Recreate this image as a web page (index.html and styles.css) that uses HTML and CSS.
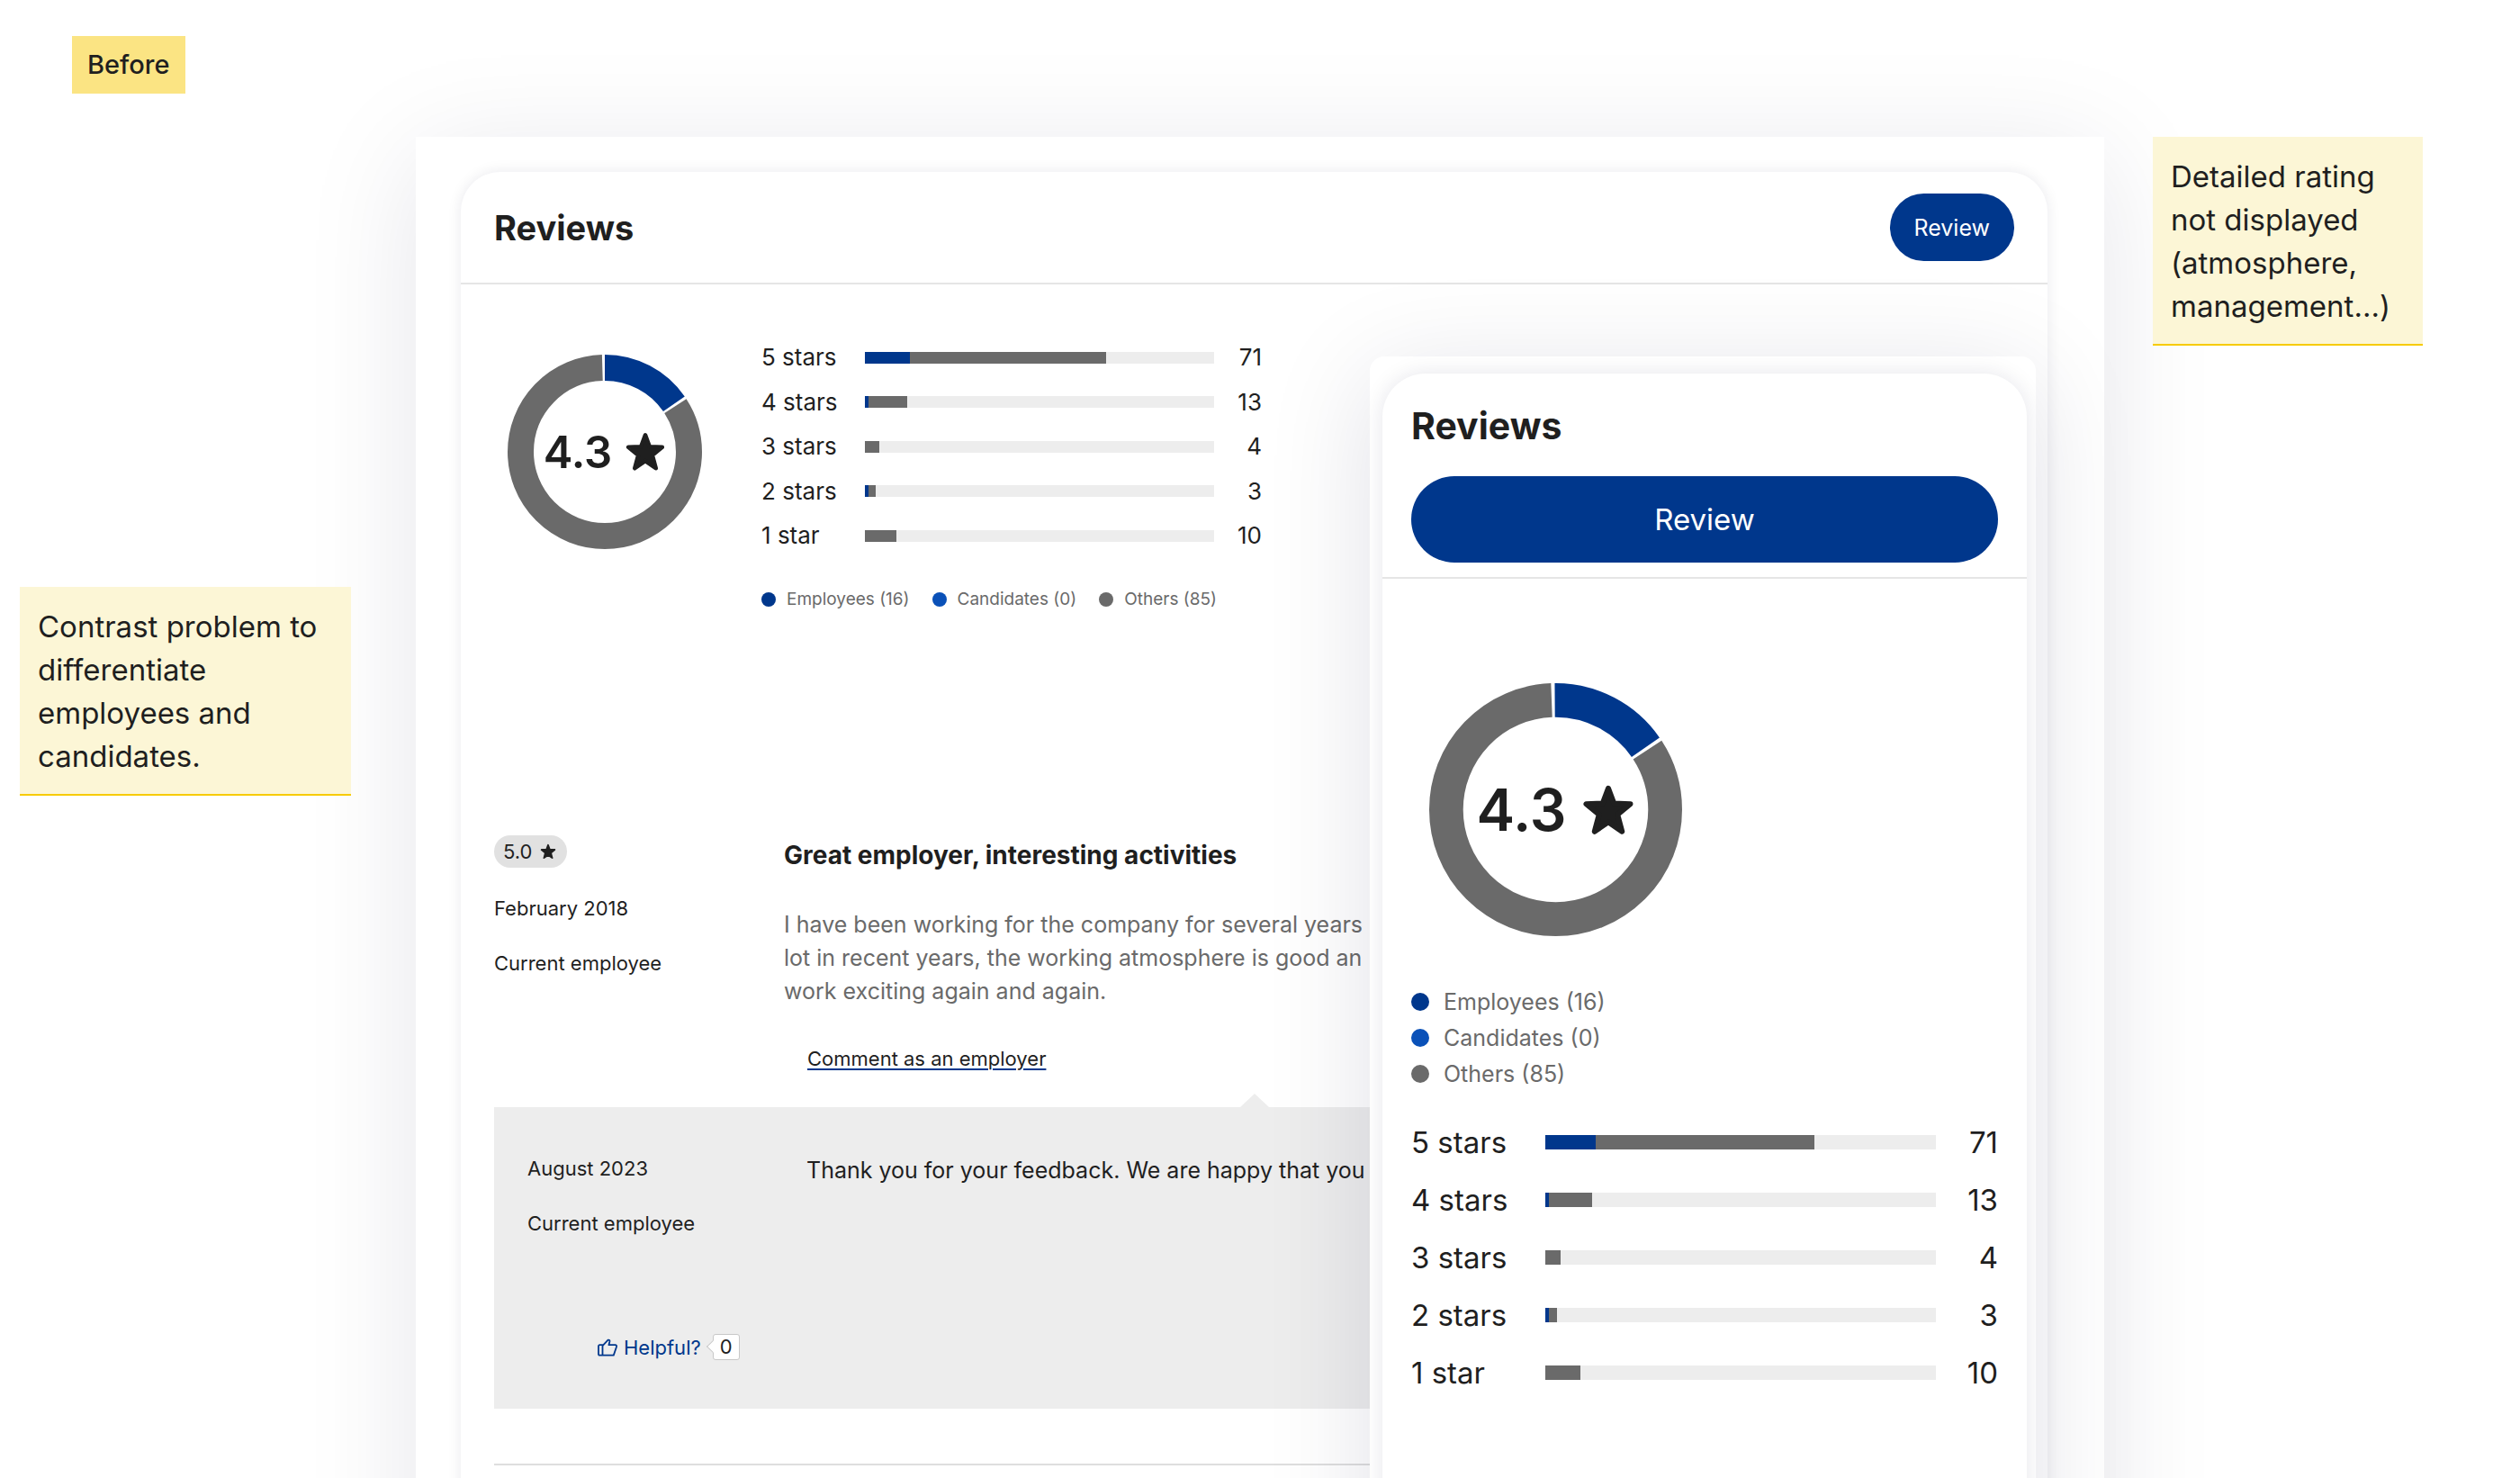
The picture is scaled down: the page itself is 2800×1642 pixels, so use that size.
FILE: index.html
```html
<!DOCTYPE html>
<html lang="en">
<head>
<meta charset="utf-8">
<meta name="viewport" content="width=device-width, initial-scale=1">
<title>Reviews: before</title>
<link rel="stylesheet" href="styles.css">
</head>
<body>
<svg class="defs" aria-hidden="true">
  <symbol id="star" viewBox="0 0 24 24">
    <path d="M12 2.3 14.5 9 21.8 9.3 16.1 14 18.1 21.5 12 17.3 5.9 21.5 7.9 14 2.2 9.3 9.5 9Z" fill="currentColor" stroke="currentColor" stroke-width="2.4" stroke-linejoin="round"/>
  </symbol>
  <symbol id="donut" viewBox="0 0 216 216">
    <g fill="none" stroke-width="29" transform="rotate(-90 108 108)">
      <circle class="arc-employees" cx="108" cy="108" r="93.5" pathLength="360" stroke-dasharray="55.3 304.7"/>
      <circle class="arc-others" cx="108" cy="108" r="93.5" pathLength="360" stroke-dasharray="301.3 58.7" stroke-dashoffset="-57"/>
    </g>
  </symbol>
</svg>
<div class="board">
  <header class="board-head"><span class="tag">Before</span></header>
  <main class="board-body">
    <aside class="note note-left">Contrast problem to differentiate employees and candidates.</aside>

    <div class="page">
      <section class="card">
        <header class="card-head">
          <h1 class="title">Reviews</h1>
          <button class="btn" type="button">Review</button>
        </header>

        <div class="summary">
          <div class="score">
            <svg class="ring" aria-hidden="true"><use href="#donut"/></svg>
            <div class="score-value">4.3 <svg class="star" aria-hidden="true"><use href="#star"/></svg></div>
          </div>
          <div class="stats">
            <ul class="bars">
              <li><span>5 stars</span><div class="bar"><i class="emp" style="width:13%"></i><i class="oth" style="width:56%"></i></div><span class="num">71</span></li>
              <li><span>4 stars</span><div class="bar"><i class="emp" style="width:1%"></i><i class="oth" style="width:11%"></i></div><span class="num">13</span></li>
              <li><span>3 stars</span><div class="bar"><i class="oth" style="width:4%"></i></div><span class="num">4</span></li>
              <li><span>2 stars</span><div class="bar"><i class="emp" style="width:1%"></i><i class="oth" style="width:2%"></i></div><span class="num">3</span></li>
              <li><span>1 star</span><div class="bar"><i class="oth" style="width:9%"></i></div><span class="num">10</span></li>
            </ul>
            <ul class="legend">
              <li><i class="dot emp"></i>Employees (16)</li>
              <li><i class="dot cand"></i>Candidates (0)</li>
              <li><i class="dot oth"></i>Others (85)</li>
            </ul>
          </div>
        </div>

        <article class="review">
          <div class="review-main">
            <div class="meta">
              <span class="badge">5.0 <svg class="badge-star" aria-hidden="true"><use href="#star"/></svg></span>
              <span>February 2018</span>
              <span>Current employee</span>
            </div>
            <div class="review-text">
              <h2>Great employer, interesting activities</h2>
              <p>I have been working for the company for several years<br>lot in recent years, the working atmosphere is good an<br>work exciting again and again.</p>
              <a class="comment" href="#reply">Comment as an employer</a>
            </div>
          </div>
          <div class="reply" id="reply">
            <div class="reply-main">
              <div class="meta">
                <span>August 2023</span>
                <span>Current employee</span>
              </div>
              <p>Thank you for your feedback. We are happy that you</p>
            </div>
            <div class="helpful">
              <button class="helpful-btn" type="button">
                <svg class="thumb" viewBox="0 0 22 20" fill="none" stroke="currentColor" stroke-width="1.8" stroke-linejoin="round" aria-hidden="true">
                  <path d="M5.5 8.2 11.6 1.6Q13.8 1.2 13.4 3.4L12.4 7.2H19.6Q21.4 7.4 21 9.2L17.8 18.6H2.4Q1 18.6 1 17.2V8.6Q1 7.2 2.4 7.2H5.5V18.6"/>
                </svg>Helpful?</button>
              <span class="count">0</span>
            </div>
          </div>
        </article>
      </section>

      <section class="phone">
        <div class="phone-card">
          <header class="phone-head">
            <h2 class="title">Reviews</h2>
            <button class="btn" type="button">Review</button>
          </header>
          <div class="phone-body">
            <div class="score">
              <svg class="ring" aria-hidden="true"><use href="#donut"/></svg>
              <div class="score-value">4.3 <svg class="star" aria-hidden="true"><use href="#star"/></svg></div>
            </div>
            <ul class="legend">
              <li><i class="dot emp"></i>Employees (16)</li>
              <li><i class="dot cand"></i>Candidates (0)</li>
              <li><i class="dot oth"></i>Others (85)</li>
            </ul>
            <ul class="bars">
              <li><span>5 stars</span><div class="bar"><i class="emp" style="width:13%"></i><i class="oth" style="width:56%"></i></div><span class="num">71</span></li>
              <li><span>4 stars</span><div class="bar"><i class="emp" style="width:1%"></i><i class="oth" style="width:11%"></i></div><span class="num">13</span></li>
              <li><span>3 stars</span><div class="bar"><i class="oth" style="width:4%"></i></div><span class="num">4</span></li>
              <li><span>2 stars</span><div class="bar"><i class="emp" style="width:1%"></i><i class="oth" style="width:2%"></i></div><span class="num">3</span></li>
              <li><span>1 star</span><div class="bar"><i class="oth" style="width:9%"></i></div><span class="num">10</span></li>
            </ul>
          </div>
        </div>
      </section>
    </div>

    <aside class="note">Detailed rating not displayed (atmosphere, management...)</aside>
  </main>
</div>
</body>
</html>
```
FILE: styles.css
```css
:root {
  --ink: #1f1f1f;
  --muted: #6a6a6a;
  --blue: #00378c;
  --blue-light: #0a51b8;
  --line: #e5e5e5;
  --track: #ededed;
}

*, *::before, *::after { box-sizing: border-box; }

body {
  margin: 0;
  background: #fff;
  color: var(--ink);
  font-family: Inter, "Liberation Sans", sans-serif;
}

h1, h2, p, ul { margin: 0; padding: 0; }
ul { list-style: none; }
button { font: inherit; border: 0; cursor: pointer; }
.defs { display: none; }

/* Board with sticky notes */
.board {
  height: 100vh;
  overflow: hidden;
  display: flex;
  flex-direction: column;
}

.board-head { padding: 40px 80px 48px; display: flex; }

.tag {
  padding: 0 17px;
  background: #fbe483;
  font-size: 29px;
  font-weight: 500;
  line-height: 64px;
}

.board-body {
  flex: 1;
  display: grid;
  grid-template-columns: 368px 1fr 300px;
  padding: 0 108px 0 22px;
}

.note {
  position: relative;
  z-index: 1;
  align-self: start;
  padding: 20px 20px 18px;
  background: #fcf6d6;
  border-bottom: 2px solid #f7cb00;
  font-size: 33px;
  line-height: 48px;
}

.note-left { margin-top: 500px; }

/* Desktop page */
.page {
  position: relative;
  margin: 0 54px -160px 72px;
  padding: 39px 63px 0 50px;
  display: flex;
  background: #fff;
  box-shadow: 0 20px 120px rgba(20, 20, 60, .1);
}

.card {
  flex: 1;
  border-radius: 44px 44px 0 0;
  background: #fff;
  box-shadow: 0 0 16px rgba(20, 20, 60, .09);
}

.card-head {
  display: flex;
  align-items: center;
  justify-content: space-between;
  padding: 24px 37px;
  border-bottom: 2px solid var(--line);
}

.title { font-size: 38px; font-weight: 700; line-height: 52px; }

.btn {
  height: 75px;
  padding: 0 27px;
  border-radius: 48px;
  background: var(--blue);
  color: #fff;
  font-size: 25px;
}

.summary { display: flex; gap: 66px; padding: 66px 52px 0; }

.score {
  display: grid;
  place-items: center;
  width: 216px;
  height: 216px;
  margin-top: 12px;
}
.score > * { grid-area: 1 / 1; }
.ring { width: 100%; height: 100%; }
.arc-employees { stroke: var(--blue); }
.arc-others { stroke: var(--muted); }

.score-value {
  display: flex;
  align-items: center;
  gap: 14px;
  font-size: 49px;
  font-weight: 600;
}
.star { width: 46px; height: 46px; }

.bars {
  display: flex;
  flex-direction: column;
  justify-content: space-between;
  width: 556px;
  height: 228px;
}
.bars li {
  display: grid;
  grid-template-columns: 115px 1fr 53px;
  align-items: center;
  font-size: 26px;
  line-height: 30px;
}
.bar { display: flex; height: 13px; background: var(--track); }
.num { text-align: right; }
.emp { background: var(--blue); }
.cand { background: var(--blue-light); }
.oth { background: var(--muted); }

.legend {
  display: flex;
  gap: 25px;
  margin-top: 44px;
  color: var(--muted);
  font-size: 19px;
  line-height: 24px;
}
.legend li { display: flex; align-items: center; gap: 12px; }
.dot { width: 16px; height: 16px; border-radius: 50%; }

/* Review entry */
.review {
  margin: 250px 37px 0;
  padding-bottom: 61px;
  border-bottom: 2px solid #dedede;
}
.review-main { display: grid; grid-template-columns: 322px 1fr; }

.meta {
  display: flex;
  flex-direction: column;
  align-items: flex-start;
  gap: 29px;
  font-size: 22px;
  line-height: 32px;
}
.badge {
  display: flex;
  align-items: center;
  gap: 9px;
  padding: 0 12px 0 10px;
  border-radius: 18px;
  background: #e1e1e1;
  line-height: 36px;
}
.badge-star { width: 18px; height: 18px; }

.review-text h2 { font-size: 28px; font-weight: 700; line-height: 44px; }
.review-text p {
  margin: 37px 0 40px;
  color: var(--muted);
}
.review p { font-size: 25px; line-height: 37px; white-space: nowrap; }

.comment {
  display: inline-block;
  margin-left: 26px;
  color: inherit;
  font-size: 22px;
  line-height: 32px;
  text-decoration: underline 2px var(--blue);
  text-underline-offset: 3px;
}

.reply {
  position: relative;
  margin-top: 38px;
  padding: 52px 37px 54px;
  background: var(--track);
}
.reply::before {
  content: "";
  position: absolute;
  left: 50%;
  bottom: 100%;
  margin-left: -16px;
  border: solid transparent;
  border-width: 0 16px 15px;
  border-bottom-color: var(--track);
}
.reply-main { display: grid; grid-template-columns: 310px 1fr; }

.helpful {
  display: flex;
  align-items: center;
  gap: 13px;
  margin: 107px 0 0 78px;
}
.helpful-btn {
  display: flex;
  align-items: center;
  gap: 7px;
  padding: 0;
  background: none;
  color: var(--blue);
  font-size: 22px;
  line-height: 28px;
}
.thumb { width: 22px; height: 20px; }

.count {
  position: relative;
  padding: 0 7px;
  background: #fff;
  border: 1px solid #c8c8c8;
  border-radius: 3px;
  font-size: 22px;
  line-height: 27px;
}
.count::before {
  content: "";
  position: absolute;
  left: -6px;
  top: 8px;
  width: 10px;
  height: 10px;
  background: #fff;
  border: solid #c8c8c8;
  border-width: 0 0 1px 1px;
  transform: rotate(45deg);
}

/* Phone view laid over the desktop page */
.phone {
  position: absolute;
  top: 244px;
  right: 76px;
  bottom: 0;
  width: 740px;
  padding: 19px 10px 0 14px;
  display: flex;
  overflow: hidden;
  border-radius: 16px;
  background: #fff;
  box-shadow: 0 20px 120px rgba(20, 20, 60, .12);
}
.phone-card {
  flex: 1;
  border-radius: 48px;
  box-shadow: 0 0 24px rgba(20, 20, 60, .1);
}
.phone-head {
  display: flex;
  flex-direction: column;
  gap: 30px;
  padding: 32px 32px 16px;
  border-bottom: 2px solid var(--line);
}
.phone .title { font-size: 41px; }
.phone .btn { height: 96px; font-size: 33px; }
.phone-body { padding: 116px 32px 0; }
.phone .score { width: 281px; height: 281px; margin: 0 0 53px 20px; }
.phone .score-value { font-size: 64px; gap: 16px; }
.phone .star { width: 60px; height: 60px; }
.phone .legend {
  flex-direction: column;
  gap: 0;
  margin: 0 0 24px;
  font-size: 25px;
  line-height: 40px;
}
.phone .legend li { gap: 16px; }
.phone .dot { width: 20px; height: 20px; }
.phone .bars { width: auto; height: auto; }
.phone .bars li {
  grid-template-columns: 149px 1fr 69px;
  font-size: 33px;
  line-height: 64px;
}
.phone .bar { height: 16px; }
```
